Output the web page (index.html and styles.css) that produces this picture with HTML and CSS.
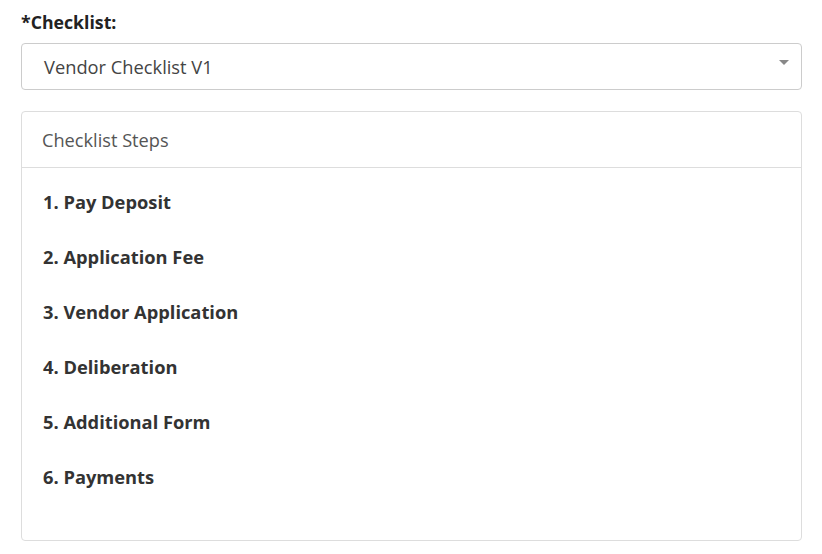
FILE: index.html
```html
<!DOCTYPE html>
<html>
<head>
<meta charset="utf-8">
<link rel="stylesheet" href="styles.css">
</head>
<body>
<div class="page">
  <label class="field-label">*Checklist:</label>
  <div class="select">
    <span class="select-value">Vendor Checklist V1</span>
    <span class="caret"></span>
  </div>
  <div class="card">
    <div class="card-header">Checklist Steps</div>
    <ol class="steps">
      <li>1. Pay Deposit</li>
      <li>2. Application Fee</li>
      <li>3. Vendor Application</li>
      <li>4. Deliberation</li>
      <li>5. Additional Form</li>
      <li>6. Payments</li>
    </ol>
  </div>
</div>
</body>
</html>
```
FILE: styles.css
```css
html, body {
  margin: 0;
  padding: 0;
  background: #fff;
}
body {
  font-family: "Open Sans", "Noto Sans", sans-serif;
  color: #333;
}
.page {
  padding: 11px 20px 0 21px;
  display: flex;
  flex-direction: column;
}
.field-label {
  font-weight: 700;
  font-size: 17.7px;
  line-height: 22px;
  color: #222;
  margin-bottom: 10px;
}
.select {
  height: 47px;
  box-sizing: border-box;
  border: 1px solid #ccc;
  border-radius: 4px;
  display: flex;
  align-items: center;
  padding: 0 12px 0 22px;
}
.select-value {
  flex: 1;
  font-size: 18.3px;
  color: #444;
}
.caret {
  width: 0;
  height: 0;
  border-left: 5px solid transparent;
  border-right: 5px solid transparent;
  border-top: 5px solid #888;
  margin-top: -8px;
}
.card {
  margin-top: 21px;
  height: 430px;
  box-sizing: border-box;
  border: 1px solid #ddd;
  border-radius: 4px;
}
.card-header {
  height: 56px;
  box-sizing: border-box;
  border-bottom: 1px solid #ddd;
  display: flex;
  align-items: center;
  padding-left: 20px;
  font-size: 18.2px;
  color: #555;
}
.steps {
  list-style: none;
  margin: 0;
  padding: 22px 0 0 21px;
}
.steps li {
  font-weight: 700;
  font-size: 18.3px;
  line-height: 24px;
  height: 55px;
  color: #333;
}
```
